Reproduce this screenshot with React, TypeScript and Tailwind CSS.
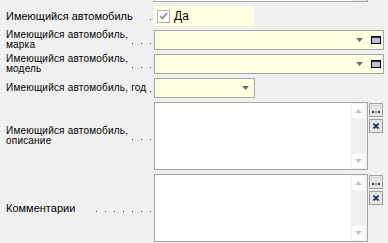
const font = "font-['Liberation_Sans',Arial,sans-serif]";

function Dots({ count }: { count: number }) {
  return (
    <div className="mt-[7px] flex shrink-0 gap-[8px] pr-[3px]">
      {Array.from({ length: count }).map((_, i) => (
        <span key={i} className="block h-[1px] w-[1px] bg-[#800080]" />
      ))}
    </div>
  );
}

function Label({ children, dots, small }: { children: React.ReactNode; dots: number; small?: boolean }) {
  return (
    <div className="flex w-[154px] shrink-0 items-center justify-between pl-[6px]">
      <div
        className={
          small
            ? 'text-[10px] leading-[10px] tracking-[0.2px] text-black'
            : 'text-[11px] leading-[13px] text-black'
        }
      >
        {children}
      </div>
      <Dots count={dots} />
    </div>
  );
}

function Arrow({ color = '#6a6a6a' }: { color?: string }) {
  return (
    <svg width="7" height="4" viewBox="0 0 7 4">
      <polygon points="0,0 7,0 3.5,4" fill={color} />
    </svg>
  );
}

function WindowIcon() {
  return (
    <div className="flex h-[8px] w-[10px] flex-col border border-black bg-[#c0c0c8]">
      <div className="h-[1px] bg-[#2030b0]" />
    </div>
  );
}

function Combo({ wide }: { wide?: boolean }) {
  return (
    <div
      className={`flex h-[20px] items-center justify-end border border-[#a5a5a5] bg-[#ffffe1] ${
        wide ? 'w-[230px] gap-[8px] pr-[2px]' : 'w-[101px] pr-[5px]'
      }`}
    >
      <Arrow />
      {wide && <WindowIcon />}
    </div>
  );
}

function SideButtons() {
  return (
    <div className="ml-[1px] flex flex-col gap-[2px] pt-[1px]">
      <button className="flex h-[14px] w-[14px] items-end justify-center border border-[#a0a0a0] bg-[#e3e3e3] pb-[3px]">
        <svg width="8" height="2" viewBox="0 0 8 2">
          <rect x="0" y="0" width="2" height="2" fill="#1c3a9c" />
          <rect x="3" y="0" width="2" height="2" fill="#c58a2a" />
          <rect x="6" y="0" width="2" height="2" fill="#1c3a9c" />
        </svg>
      </button>
      <button className="flex h-[14px] w-[14px] items-center justify-center border border-[#a0a0a0] bg-[#e3e3e3]">
        <svg width="6" height="6" viewBox="0 0 6 6">
          <path d="M0.5 0.5 L5.5 5.5 M5.5 0.5 L0.5 5.5" stroke="#14206a" strokeWidth="1.6" />
        </svg>
      </button>
    </div>
  );
}

function Memo() {
  return (
    <div className="flex h-[68px] w-[214px] border border-[#a5a5a5] bg-white">
      <div className="flex-1" />
      <div className="flex w-[16px] flex-col justify-between bg-[#f0f0f0] px-[1px] py-[1px]">
        <div className="flex h-[14px] w-[13px] items-center justify-center bg-white">
          <svg width="7" height="4" viewBox="0 0 7 4">
            <polygon points="0,4 7,4 3.5,0" fill="#c4c4c4" />
          </svg>
        </div>
        <div className="flex h-[14px] w-[13px] items-center justify-center bg-white">
          <Arrow color="#c4c4c4" />
        </div>
      </div>
    </div>
  );
}

export default function App() {
  return (
    <div className={`${font} h-[243px] w-[388px] overflow-hidden bg-[#f0f0f0]`}>
      <div className="flex flex-col gap-[4px]">
        <div className="ml-[154px] flex h-[2px] w-[214px] border-x border-b border-[#a5a5a5] bg-white">
          <div className="flex-1" />
          <div className="w-[16px] bg-[#e6e6e6]" />
        </div>

        <div className="flex h-[20px]">
          <Label dots={1}>Имеющийся автомобиль</Label>
          <div className="flex w-[100px] items-center gap-[4px] bg-[#ffffe1] pl-[3px]">
            <div className="flex h-[13px] w-[13px] items-center justify-center border border-[#b4b4b4] bg-white">
              <svg width="9" height="8" viewBox="0 0 9 8">
                <path d="M1 4 L3.5 6.5 L8 1" stroke="#7c7c7c" strokeWidth="1.4" fill="none" />
              </svg>
            </div>
            <span className="text-[12px] leading-[14px] text-black">Да</span>
          </div>
        </div>

        <div className="flex h-[20px]">
          <Label dots={3} small>
            Имеющийся автомобиль,
            <br />
            марка
          </Label>
          <Combo wide />
        </div>

        <div className="flex h-[20px]">
          <Label dots={3} small>
            Имеющийся автомобиль,
            <br />
            модель
          </Label>
          <Combo wide />
        </div>

        <div className="flex h-[20px]">
          <Label dots={1} small>
            Имеющийся автомобиль, год
          </Label>
          <Combo />
        </div>

        <div className="flex h-[68px]">
          <Label dots={3} small>
            Имеющийся автомобиль,
            <br />
            описание
          </Label>
          <Memo />
          <SideButtons />
        </div>

        <div className="flex h-[68px]">
          <Label dots={7}>Комментарии</Label>
          <Memo />
          <SideButtons />
        </div>
      </div>
    </div>
  );
}
